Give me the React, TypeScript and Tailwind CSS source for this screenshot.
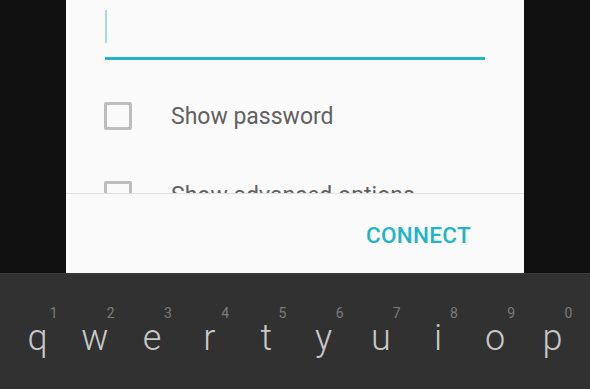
import React from 'react';

const keys = [
  ['q', '1'],
  ['w', '2'],
  ['e', '3'],
  ['r', '4'],
  ['t', '5'],
  ['y', '6'],
  ['u', '7'],
  ['i', '8'],
  ['o', '9'],
  ['p', '0'],
];

const Checkbox: React.FC = () => (
  <div className="w-[28px] h-[28px] shrink-0 rounded-[2px] border-[3px] border-[#bdbdbd]" />
);

const OptionRow: React.FC<{ label: string }> = ({ label }) => (
  <div className="flex items-center h-[28px]">
    <Checkbox />
    <span className="ml-[39px] text-[23px] leading-none text-[#616161]">{label}</span>
  </div>
);

const Dialog: React.FC = () => (
  <div className="w-[458px] h-[273px] bg-[#fafafa] flex flex-col">
    <div className="h-[193px] overflow-hidden px-[39px]">
      <div className="pt-[10px]">
        <div className="w-[2px] h-[33px] bg-[#a6dbe3]" />
        <div className="mt-[14px] h-[3px] bg-[#22b4c6]" />
      </div>
      <div className="mt-[42px] -ml-[1px]">
        <OptionRow label="Show password" />
      </div>
      <div className="mt-[51px] -ml-[1px]">
        <OptionRow label="Show advanced options" />
      </div>
    </div>
    <div className="border-t border-[#e0e0e0] flex-1 flex items-center justify-end pr-[53px] pt-[4px]">
      <button className="text-[22.5px] font-medium leading-none tracking-[0.3px] text-[#22b4c6]">
        CONNECT
      </button>
    </div>
  </div>
);

const Keyboard: React.FC = () => (
  <div className="h-[116px] bg-[#313131] border-t border-[#3a3a3a] px-[9px] pt-[32px]">
    <div className="grid grid-cols-10">
      {keys.map(([letter, num]) => (
        <div key={letter} className="flex flex-col items-center">
          <span className="ml-[32px] text-[14px] leading-[14px] text-[#7c7c7c]">{num}</span>
          <span className="text-[36px] leading-[36px] font-light text-[#c8c8c8]">{letter}</span>
        </div>
      ))}
    </div>
  </div>
);

export default function App() {
  return (
    <div className="w-[590px] h-[389px] bg-[#111111] flex flex-col overflow-hidden" style={{ fontFamily: 'Roboto, "Noto Sans", sans-serif' }}>
      <div className="flex justify-center">
        <Dialog />
      </div>
      <Keyboard />
    </div>
  );
}
